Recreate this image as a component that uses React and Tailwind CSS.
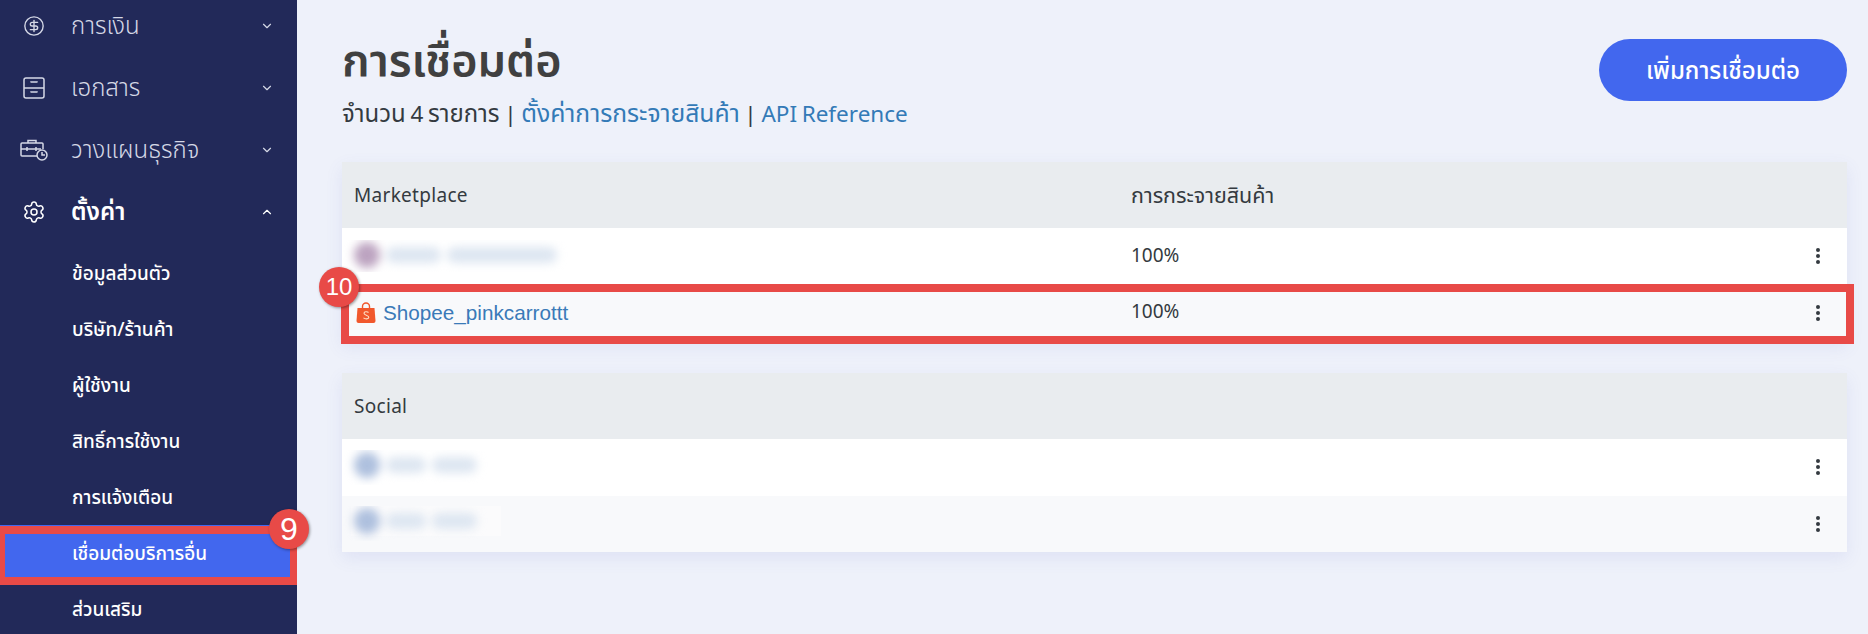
import React from 'react';
import { ChevronDown, ChevronUp, CircleDollarSign, Settings } from 'lucide-react';

const thai = 'font-["Noto_Sans","Noto_Sans_Thai","Liberation_Sans",sans-serif]';

const subMenus = ['ข้อมูลส่วนตัว', 'บริษัท/ร้านค้า', 'ผู้ใช้งาน', 'สิทธิ์การใช้งาน', 'การแจ้งเตือน', 'เชื่อมต่อบริการอื่น', 'ส่วนเสริม'];

const DrawerIcon = () => (
    <svg width="22" height="22" viewBox="0 0 22 22" fill="none" stroke="currentColor" strokeWidth="1.5">
        <rect x="1" y="1" width="20" height="20" rx="2" />
        <path d="M1 11h20M8 5.5V5h6v.5M8 15.5V15h6v.5" />
    </svg>
);

const BriefcaseClockIcon = () => (
    <svg width="28" height="22" viewBox="0 0 28 22" fill="none" stroke="currentColor" strokeWidth="1.5">
        <path d="M17 17H2a1 1 0 0 1-1-1V5a1 1 0 0 1 1-1h20a1 1 0 0 1 1 1v5" />
        <path d="M8 4V1.5h8V4M1 10h20M7 8v4M16 8v4" />
        <circle cx="22" cy="16" r="5" />
        <path d="M22 13v3h3" />
    </svg>
);

const ShopeeIcon = () => (
    <svg width="20" height="21" viewBox="0 0 20 21">
        <path d="M1.500 6h17l1 13a2 2 0 0 1-2 2h-15a2 2 0 0 1-2-2z" fill="#f1582c" />
        <path d="M6.500 7V4.500a3.500 3.500 0 0 1 7 0V7" fill="none" stroke="#f1582c" strokeWidth="1.400" />
        <path d="M12.500 10.500c-1-1-4.500-1.200-4.500.8 0 2.200 4.800 1.500 4.800 4 0 2-3.600 2-5.300.6" fill="none" stroke="#fde0c8" strokeWidth="1.100" />
    </svg>
);

const Dots = () => (
    <div className="flex flex-col gap-[2px]">
        <span className="w-[4px] h-[4px] rounded-full bg-[#343a40]" />
        <span className="w-[4px] h-[4px] rounded-full bg-[#343a40]" />
        <span className="w-[4px] h-[4px] rounded-full bg-[#343a40]" />
    </div>
);

const Badge = ({ children, className }) => (
    <div className={`absolute w-[40px] h-[40px] rounded-full bg-[#e84a47] text-white flex items-center justify-center font-['Liberation_Sans',sans-serif] shadow-[1px_1px_3px_rgba(0,0,0,0.4)] z-20 ${className}`}>
        {children}
    </div>
);

// censored account name in the reference, just soft blobs
const Blurred = ({ tone, widths, boxWidth, up }) => (
    <div className={`flex items-center h-[30px] -ml-[3px] pl-[3px] bg-white/40 ${up ? 'mb-[5px]' : 'mb-[2px]'}`} style={{ width: boxWidth }}>
        <div className="flex items-center gap-[6px] blur-[5px]">
            <span className={`w-[26px] h-[26px] rounded-full ${tone}`} />
            {widths.map((w, i) => (
                <span key={i} className="h-[16px] rounded-full bg-[#dde6f1]" style={{ width: w }} />
            ))}
        </div>
    </div>
);

const MainMenu = ({ icon, label, active }) => (
    <div className={`h-[62px] shrink-0 flex items-center ${active ? 'text-white' : 'text-[#d5d8e6]'}`}>
        <div className="w-[71px] flex justify-center pr-[3px] shrink-0">{icon}</div>
        <span className={`flex-1 pb-[2px] text-[24px] ${active ? 'font-semibold' : 'font-light'}`}>{label}</span>
        {active ? <ChevronUp size={14} className="mr-[23px]" /> : <ChevronDown size={14} className="mr-[23px]" />}
    </div>
);

const Sidebar = () => (
    <aside className="relative w-[297px] shrink-0 h-full bg-[#222959] overflow-hidden">
        <div className="flex flex-col -mt-[5px]">
            <MainMenu icon={<CircleDollarSign size={22} strokeWidth={1.5} />} label="การเงิน" />
            <MainMenu icon={<DrawerIcon />} label="เอกสาร" />
            <MainMenu icon={<BriefcaseClockIcon />} label="วางแผนธุรกิจ" />
            <MainMenu icon={<Settings size={24} strokeWidth={1.5} />} label="ตั้งค่า" active />
            <div className="flex flex-col mt-[2px]">
                {subMenus.map((name) => (
                    <div
                        key={name}
                        className={`h-[56px] shrink-0 pl-[72px] flex items-center text-[19px] font-medium text-white ${name === 'เชื่อมต่อบริการอื่น' ? 'bg-[#4267ee]' : ''}`}
                    >
                        {name}
                    </div>
                ))}
            </div>
        </div>
        <div className="absolute left-0 top-[526px] w-[297px] h-[59px] border-y-[8px] border-l-[5px] border-r-[7px] border-[#e84a47]" />
    </aside>
);

const Row = ({ children, striped, percent }) => (
    <div className={`flex items-center h-[56.5px] ${striped ? 'bg-[#f8f9fb]' : 'bg-white'}`}>
        <div className="w-[777px] pl-[12px] shrink-0 overflow-hidden">{children}</div>
        <div className="flex-1 pl-[12px] pb-[3px] text-[19px] text-[#343a40]">{percent}</div>
        <div className="pr-[27px]"><Dots /></div>
    </div>
);

const Card = ({ title, second, children }) => (
    <section className="shadow-[0_6px_16px_rgba(90,100,200,0.10)]">
        <div className="flex items-center h-[66px] bg-[#e9ecef] text-[19px] text-[#343a40]">
            <div className="w-[777px] pl-[12px] shrink-0 tracking-[0.3px]">{title}</div>
            <div className="pl-[12px] text-[21.500px]">{second}</div>
        </div>
        {children}
    </section>
);

export default function App() {
    return (
        <div className={`flex w-[1868px] h-[634px] overflow-hidden bg-[#eef1fa] ${thai}`}>
            <Sidebar />
            <main className="relative flex-1 pl-[45px] pr-[21px]">
                <div className="flex justify-between pt-[39px] h-[162px]">
                    <div>
                        <h1 className="-mt-[4px] text-[45px] leading-[48px] font-semibold text-[#404040]">การเชื่อมต่อ</h1>
                        <p className="mt-[15px] text-[22.500px] leading-[30px] text-[#343a40] whitespace-nowrap [word-spacing:-1.2px]">
                            <span className="text-[24px]">จำนวน</span> 4 <span className="text-[24px]">รายการ</span> | <span className="text-[#337ab7] text-[24.700px]">ตั้งค่าการกระจายสินค้า</span> | <span className="text-[#337ab7]">API Reference</span>
                        </p>
                    </div>
                    <button className="w-[248px] h-[62px] rounded-full bg-[#4267ee] text-white text-[24px] font-medium">เพิ่มการเชื่อมต่อ</button>
                </div>

                <Card title="Marketplace" second="การกระจายสินค้า">
                    <Row percent="100%"><Blurred tone="bg-[#bca3c0]" widths={[55, 110]} boxWidth={244} /></Row>
                    <Row percent="100%" striped>
                        <div className="flex items-center gap-[7px] pl-[2px] pb-[1px] text-[20.700px] font-['Liberation_Sans',sans-serif] text-[#3a7ab8]">
                            <ShopeeIcon />
                            Shopee_pinkcarrottt
                        </div>
                    </Row>
                </Card>

                <div className="mt-[32px]">
                    <Card title="Social">
                        <Row><Blurred tone="bg-[#aec0de]" widths={[40, 45]} boxWidth={150} up /></Row>
                        <Row striped><Blurred tone="bg-[#aec0de]" widths={[40, 45]} boxWidth={150} up /></Row>
                    </Card>
                </div>

                {/* annotation over the Shopee row */}
                <div className="absolute left-[44px] top-[284px] w-[1513px] h-[60px] border-[8px] border-[#e84a47] z-10" />
                <Badge className="left-[22px] top-[267px] text-[24px]">10</Badge>
            </main>
            <Badge className="left-[269px] top-[509px] text-[32px]">9</Badge>
        </div>
    );
}
